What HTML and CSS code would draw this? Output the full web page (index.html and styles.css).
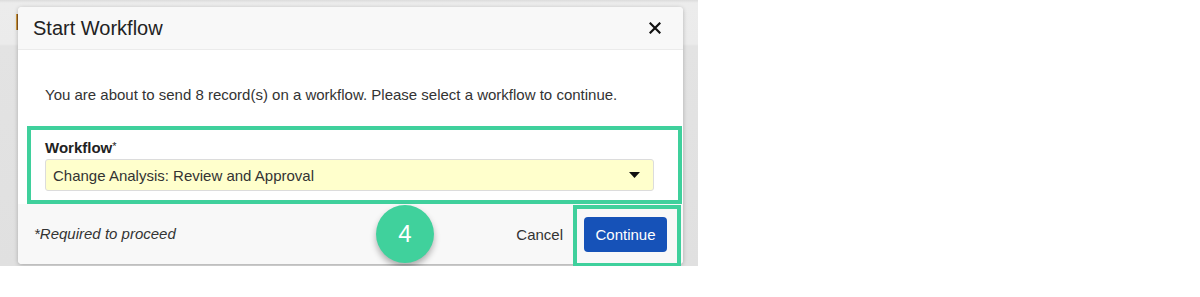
FILE: index.html
```html
<!DOCTYPE html>
<html lang="en">
<head>
  <meta charset="UTF-8">
  <title>Start Workflow</title>
  <link rel="stylesheet" href="styles.css">
</head>
<body>
  <div class="screen">
    <div class="page-title">l</div>

    <div class="modal">
      <div class="modal-header">
        <h2>Start Workflow</h2>
        <button class="close" aria-label="Close">
          <svg width="12" height="12" viewBox="0 0 12 12">
            <path d="M1.5 1.5 L10.5 10.5 M10.5 1.5 L1.5 10.5" stroke="#111" stroke-width="2.2" stroke-linecap="square"/>
          </svg>
        </button>
      </div>

      <div class="modal-body">
        <p class="intro">You are about to send 8 record(s) on a workflow. Please select a workflow to continue.</p>

        <label for="workflow">Workflow<span class="req">*</span></label>
        <div class="select">
          <span>Change Analysis: Review and Approval</span>
          <svg width="11" height="6" viewBox="0 0 11 6">
            <path d="M0 0 L11 0 L5.5 6 Z" fill="#111"/>
          </svg>
        </div>
      </div>

      <div class="modal-footer">
        <span class="note">*Required to proceed</span>
        <div class="actions">
          <button class="cancel">Cancel</button>
          <button class="continue">Continue</button>
        </div>
      </div>
    </div>

    <div class="highlight field-box"></div>
    <div class="highlight button-box"></div>
    <div class="step">4</div>
  </div>
</body>
</html>
```

FILE: styles.css
```css
body {
  margin: 0;
  background: #ffffff;
  font-family: "Liberation Sans", Arial, sans-serif;
  color: #333;
}
.screen {
  position: relative;
  width: 698px;
  height: 266px;
  padding: 7px 0 0 18px;
  box-sizing: border-box;
  background: linear-gradient(to bottom, #dcdcdc 0, #ececec 3px, #ebebeb 44px, #e3e3e3 46px, #e0e0e0 100%);
}
.page-title {
  position: absolute;
  left: 15px;
  top: 10px;
  font-size: 22px;
  color: #8a5a1c;
}
.modal {
  position: relative;
  width: 665px;
  height: 257px;
  background: #fff;
  border-radius: 4px;
  box-shadow: 0 1px 4px rgba(0, 0, 0, 0.25);
  display: flex;
  flex-direction: column;
  overflow: hidden;
}
.modal-header {
  height: 43px;
  box-sizing: border-box;
  background: #f8f8f8;
  border-bottom: 1px solid #ebebeb;
  display: flex;
  align-items: center;
  justify-content: space-between;
  padding: 0 22px 0 15px;
}
.modal-header h2 {
  margin: 0;
  font-size: 20px;
  font-weight: normal;
  color: #222;
}
.close {
  background: none;
  border: none;
  padding: 0;
  display: flex;
}
.modal-body {
  height: 154px;
  box-sizing: border-box;
  padding: 36px 29px 0 27px;
}
.intro {
  margin: 0 0 36px;
  font-size: 15px;
  color: #333;
}
label {
  display: block;
  font-size: 15px;
  font-weight: bold;
  color: #222;
  margin-bottom: 3px;
}
.req {
  font-size: 11px;
  font-weight: normal;
  vertical-align: 3px;
}
.select {
  height: 32px;
  box-sizing: border-box;
  background: #ffffcc;
  border: 1px solid #dcdcdc;
  border-radius: 3px;
  display: flex;
  align-items: center;
  justify-content: space-between;
  padding: 0 13px 0 7px;
  font-size: 15px;
  color: #333;
}
.modal-footer {
  flex: 1;
  background: #f8f8f8;
  display: flex;
  align-items: center;
  justify-content: space-between;
  padding: 0 16px;
}
.note {
  font-style: italic;
  font-size: 15px;
  color: #333;
  margin-top: -2px;
}
.actions {
  display: flex;
  align-items: center;
  gap: 21px;
}
.actions button {
  font-family: "Liberation Sans", Arial, sans-serif;
  font-size: 15px;
  cursor: pointer;
}
.cancel {
  background: none;
  border: none;
  color: #333;
  padding: 0;
}
.continue {
  background: #1652b8;
  color: #fff;
  border: none;
  border-radius: 4px;
  width: 83px;
  height: 35px;
}
.highlight {
  position: absolute;
  border: 4px solid #3fd09c;
  box-sizing: border-box;
}
.field-box {
  left: 27px;
  top: 126px;
  width: 655px;
  height: 78px;
}
.button-box {
  left: 573px;
  top: 205px;
  width: 108px;
  height: 62px;
}
.step {
  position: absolute;
  left: 376px;
  top: 205px;
  width: 58px;
  height: 58px;
  border-radius: 50%;
  background: #40d19c;
  color: #fff;
  font-size: 24px;
  display: flex;
  align-items: center;
  justify-content: center;
  box-shadow: 0 4px 6px rgba(0, 0, 0, 0.3);
}
```
